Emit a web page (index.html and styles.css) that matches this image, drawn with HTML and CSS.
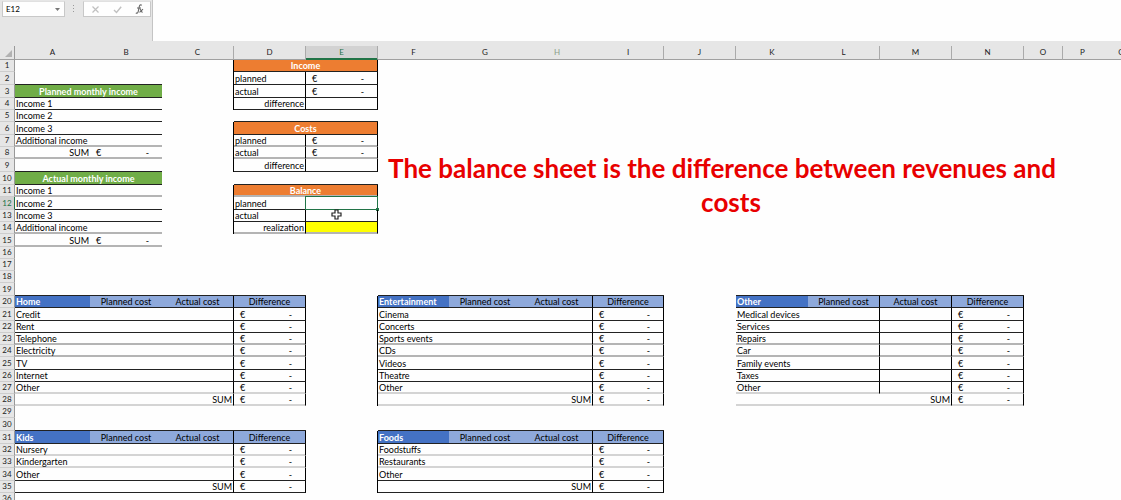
FILE: index.html
```html
<!DOCTYPE html>
<html lang="en">
<head>
<meta charset="utf-8">
<title>Household budget</title>
<link rel="stylesheet" href="styles.css">
</head>
<body>
<header class="bar">
  <div class="namebox">
    <input class="name" type="text" value="E12" aria-label="Name box">
    <button class="drop" type="button" aria-label="Show names"><svg width="5" height="3" viewBox="0 0 5 3"><path d="M0 0h5L2.500 3z" fill="#777"/></svg></button>
  </div>
  <svg class="grip" width="3" height="9" viewBox="0 0 3 9"><path d="M1 1h1v1H1zM1 4h1v1H1zM1 7h1v1H1z" fill="#999"/></svg>
  <div class="tools">
    <button type="button" aria-label="Cancel"><svg width="9" height="9" viewBox="0 0 9 9"><path d="M1.500 1.500l6 6M7.500 1.500l-6 6" stroke="#c0c0c0" stroke-width="1.200" fill="none"/></svg></button>
    <button type="button" aria-label="Enter"><svg width="9" height="9" viewBox="0 0 9 9"><path d="M1 5l2.500 2.500L8.200 1.800" stroke="#c0c0c0" stroke-width="1.400" fill="none"/></svg></button>
    <button type="button" aria-label="Insert function"><svg width="9" height="10" viewBox="0 0 9 10"><path d="M6.800 1.300C5.300.3 4.600 1 4.300 2.500L3.200 7.600C2.900 9 2 9.500.8 8.900M2 4h4M4.800 5.200c1.200-.4 1 3.400 2.800 2.900M8 5.200L4.500 8.300" stroke="#666" stroke-width="1.100" fill="none"/></svg></button>
  </div>
  <textarea class="formula" aria-label="Formula bar"></textarea>
</header>
<main class="sheet">
<table class="grid">
<colgroup><col class="c-num"><col class="c-first"><col><col><col><col><col class="c-71"><col><col><col class="c-71"><col><col><col><col><col><col class="c-small"><col class="c-small"><col class="c-small"></colgroup>
<thead>
<tr><th class="corner"><svg width="7" height="7" viewBox="0 0 7 7"><path d="M7 0v7H0z" fill="#b2b2b2"/></svg></th><th>A</th><th>B</th><th class="edge">C</th><th class="edge">D</th><th class="picked">E</th><th>F</th><th>G</th><th class="faded">H</th><th class="edge">I</th><th class="edge">J</th><th>K</th><th class="edge">L</th><th class="edge">M</th><th class="edge">N</th><th class="edge">O</th><th>P</th><th>Q</th></tr>
</thead>
<tbody>
<tr><th>1</th><td colspan="2"></td><td class="r"></td><td class="orange b r" colspan="2">Income</td></tr>
<tr class="tall"><th>2</th><td class="b" colspan="2"></td><td class="r"></td><td class="b r">planned</td><td class="b r"><div class="money"><span>€</span><span>-</span></div></td></tr>
<tr class="tall"><th>3</th><td class="green b" colspan="2">Planned monthly income</td><td class="r"></td><td class="b r">actual</td><td class="b r"><div class="money"><span>€</span><span>-</span></div></td></tr>
<tr><th>4</th><td class="b" colspan="2">Income 1</td><td class="r"></td><td class="b r end">difference</td><td class="b r"></td></tr>
<tr><th>5</th><td class="b" colspan="2">Income 2</td><td></td><td class="b" colspan="2"></td></tr>
<tr class="tall"><th>6</th><td class="b" colspan="2">Income 3</td><td class="r"></td><td class="orange b r" colspan="2">Costs</td></tr>
<tr class="soft"><th>7</th><td class="b" colspan="2">Additional income</td><td class="r"></td><td class="b r">planned</td><td class="b r"><div class="money"><span>€</span><span>-</span></div></td></tr>
<tr class="soft"><th>8</th><td class="b end">SUM</td><td class="b"><div class="money"><span>€</span><span>-</span></div></td><td class="r"></td><td class="b r">actual</td><td class="b r"><div class="money"><span>€</span><span>-</span></div></td></tr>
<tr class="tall"><th>9</th><td class="b" colspan="2"></td><td class="r"></td><td class="b r end">difference</td><td class="b r"></td></tr>
<tr class="tall"><th>10</th><td class="green b" colspan="2">Actual monthly income</td><td></td><td class="b" colspan="2"></td></tr>
<tr class="soft"><th>11</th><td class="b" colspan="2">Income 1</td><td class="r"></td><td class="orange b r" colspan="2">Balance</td></tr>
<tr class="tall"><th class="picked">12</th><td class="b" colspan="2">Income 2</td><td class="r"></td><td class="b r">planned</td><td class="b r active"><span class="cursor-frame"></span></td></tr>
<tr><th>13</th><td class="b" colspan="2">Income 3</td><td class="r"></td><td class="b r">actual</td><td class="b r active"><svg class="pointer" width="11" height="11" viewBox="0 0 11 11"><path d="M4 1h3v3h3v3H7v3H4V7H1V4h3z" fill="#fff" stroke="#222" stroke-width="1.200"/></svg></td></tr>
<tr class="soft"><th>14</th><td class="b" colspan="2">Additional income</td><td class="r"></td><td class="b r end">realization</td><td class="b r yellow"></td></tr>
<tr class="tall soft"><th>15</th><td class="b end">SUM</td><td class="b"><div class="money"><span>€</span><span>-</span></div></td></tr>
<tr><th>16</th></tr>
<tr><th>17</th></tr>
<tr><th>18</th></tr>
<tr class="tall"><th>19</th><td class="b" colspan="4"></td><td></td><td class="b" colspan="4"></td><td></td><td class="b" colspan="4"></td></tr>
<tr><th>20</th><td class="blue b">Home</td><td class="pale b">Planned cost</td><td class="pale b r">Actual cost</td><td class="pale b r">Difference</td><td class="r"></td><td class="blue b">Entertainment</td><td class="pale b">Planned cost</td><td class="pale b r">Actual cost</td><td class="pale b r">Difference</td><td></td><td class="blue b">Other</td><td class="pale b r">Planned cost</td><td class="pale b r">Actual cost</td><td class="pale b r">Difference</td></tr>
<tr class="tall"><th>21</th><td class="b r" colspan="3">Credit</td><td class="b r"><div class="money"><span>€</span><span>-</span></div></td><td class="r"></td><td class="b r" colspan="3">Cinema</td><td class="b r"><div class="money"><span>€</span><span>-</span></div></td><td></td><td class="b r" colspan="2">Medical devices</td><td class="b r"></td><td class="b r"><div class="money"><span>€</span><span>-</span></div></td></tr>
<tr><th>22</th><td class="b r" colspan="3">Rent</td><td class="b r"><div class="money"><span>€</span><span>-</span></div></td><td class="r"></td><td class="b r" colspan="3">Concerts</td><td class="b r"><div class="money"><span>€</span><span>-</span></div></td><td></td><td class="b r" colspan="2">Services</td><td class="b r"></td><td class="b r"><div class="money"><span>€</span><span>-</span></div></td></tr>
<tr class="soft"><th>23</th><td class="b r" colspan="3">Telephone</td><td class="b r"><div class="money"><span>€</span><span>-</span></div></td><td class="r"></td><td class="b r" colspan="3">Sports events</td><td class="b r"><div class="money"><span>€</span><span>-</span></div></td><td></td><td class="b r" colspan="2">Repairs</td><td class="b r"></td><td class="b r"><div class="money"><span>€</span><span>-</span></div></td></tr>
<tr class="soft"><th>24</th><td class="b r" colspan="3">Electricity</td><td class="b r"><div class="money"><span>€</span><span>-</span></div></td><td class="r"></td><td class="b r" colspan="3">CDs</td><td class="b r"><div class="money"><span>€</span><span>-</span></div></td><td></td><td class="b r" colspan="2">Car</td><td class="b r"></td><td class="b r"><div class="money"><span>€</span><span>-</span></div></td></tr>
<tr class="tall"><th>25</th><td class="b r" colspan="3">TV</td><td class="b r"><div class="money"><span>€</span><span>-</span></div></td><td class="r"></td><td class="b r" colspan="3">Videos</td><td class="b r"><div class="money"><span>€</span><span>-</span></div></td><td></td><td class="b r" colspan="2">Family events</td><td class="b r"></td><td class="b r"><div class="money"><span>€</span><span>-</span></div></td></tr>
<tr><th>26</th><td class="b r" colspan="3">Internet</td><td class="b r"><div class="money"><span>€</span><span>-</span></div></td><td class="r"></td><td class="b r" colspan="3">Theatre</td><td class="b r"><div class="money"><span>€</span><span>-</span></div></td><td></td><td class="b r" colspan="2">Taxes</td><td class="b r"></td><td class="b r"><div class="money"><span>€</span><span>-</span></div></td></tr>
<tr class="soft light"><th>27</th><td class="b r" colspan="3">Other</td><td class="b r"><div class="money"><span>€</span><span>-</span></div></td><td class="r"></td><td class="b r" colspan="3">Other</td><td class="b r"><div class="money"><span>€</span><span>-</span></div></td><td></td><td class="b r" colspan="2">Other</td><td class="b r"></td><td class="b r"><div class="money"><span>€</span><span>-</span></div></td></tr>
<tr class="soft light"><th>28</th><td class="b r end" colspan="3">SUM</td><td class="b r"><div class="money"><span>€</span><span>-</span></div></td><td class="r"></td><td class="b r end" colspan="3">SUM</td><td class="b r"><div class="money"><span>€</span><span>-</span></div></td><td></td><td class="b r end" colspan="3">SUM</td><td class="b r"><div class="money"><span>€</span><span>-</span></div></td></tr>
<tr><th>29</th></tr>
<tr class="tall"><th>30</th><td class="b" colspan="4"></td><td></td><td class="b" colspan="4"></td></tr>
<tr class="tall"><th>31</th><td class="blue b">Kids</td><td class="pale b">Planned cost</td><td class="pale b r">Actual cost</td><td class="pale b r">Difference</td><td class="r"></td><td class="blue b">Foods</td><td class="pale b">Planned cost</td><td class="pale b r">Actual cost</td><td class="pale b r">Difference</td></tr>
<tr class="soft light"><th>32</th><td class="b r" colspan="3">Nursery</td><td class="b r"><div class="money"><span>€</span><span>-</span></div></td><td class="r"></td><td class="b r" colspan="3">Foodstuffs</td><td class="b r"><div class="money"><span>€</span><span>-</span></div></td></tr>
<tr class="soft light"><th>33</th><td class="b r" colspan="3">Kindergarten</td><td class="b r"><div class="money"><span>€</span><span>-</span></div></td><td class="r"></td><td class="b r" colspan="3">Restaurants</td><td class="b r"><div class="money"><span>€</span><span>-</span></div></td></tr>
<tr class="tall"><th>34</th><td class="b r" colspan="3">Other</td><td class="b r"><div class="money"><span>€</span><span>-</span></div></td><td class="r"></td><td class="b r" colspan="3">Other</td><td class="b r"><div class="money"><span>€</span><span>-</span></div></td></tr>
<tr><th>35</th><td class="b r end" colspan="3">SUM</td><td class="b r"><div class="money"><span>€</span><span>-</span></div></td><td class="r"></td><td class="b r end" colspan="3">SUM</td><td class="b r"><div class="money"><span>€</span><span>-</span></div></td></tr>
<tr><th>36</th></tr>
</tbody>
</table>
<p class="note">The balance sheet is the difference between revenues and <span class="note-end">costs</span></p>
</main>
</body>
</html>
```
FILE: styles.css
```css
* { box-sizing: border-box; }
body {
  margin: 0;
  height: 100vh;
  display: flex;
  flex-direction: column;
  overflow: hidden;
  background: #fefefe;
  color: #000;
  font: 9px/11px Lato, "Open Sans", sans-serif;
}
button, input, textarea {
  margin: 0;
  padding: 0;
  border: 0;
  background: none;
  font: inherit;
  color: inherit;
  outline: 0;
}
button { display: flex; align-items: center; justify-content: center; }

/* Formula bar */
.bar {
  flex: none;
  display: flex;
  align-items: flex-start;
  background: #e6e6e6;
  padding: 0 0 5px 2px;
}
.namebox, .tools {
  display: flex;
  align-items: center;
  height: 16px;
  margin-top: 1px;
  background: #fefefe;
  border: 1px solid #c8c8c8;
  border-top-color: #e0e0e0;
}
.namebox { width: 63px; }
.name { flex: 1; min-width: 0; padding-left: 3px; font-size: 8px; }
.drop { width: 13px; height: 14px; }
.grip { margin: 4px 8px 0 7px; }
.tools { width: 68px; justify-content: space-around; }
.tools button { width: 20px; height: 14px; }
.formula {
  flex: 1;
  height: 41px;
  margin-left: 1px;
  padding: 3px;
  background: #fefefe;
  border-left: 1px solid #c4c4c4;
  resize: none;
}

/* Worksheet */
.sheet { position: relative; flex: 1; overflow: hidden; background: linear-gradient(#e6e6e6 13px, #a0a0a0 13px, #a0a0a0 14px, #fefefe 14px); }
.grid { table-layout: fixed; width: 0; border-collapse: separate; border-spacing: 0; }
col { width: 72px; }
.c-num { width: 15px; }
.c-first { width: 75px; }
.c-71 { width: 71px; }
.c-small { width: 39px; }
th, td { height: 12px; padding: 0 1px; overflow: hidden; white-space: nowrap; vertical-align: middle; text-align: left; }
.tall th, .tall td { height: 13px; }
th { font-weight: 400; font-size: 8px; text-align: center; color: #222; background: #e6e6e6; }
thead th { height: 14px; border-bottom: 1px solid #a0a0a0; }
tbody th { padding: 0; border-right: 1px solid #999; border-bottom: 1px solid #cdcdcd; }
th.corner { padding: 0 2px 2px; text-align: right; vertical-align: bottom; border-right: 1px solid #999; }
.corner svg { display: block; margin-left: auto; }
.edge { border-right: 1px solid #aaa; }
.faded { color: #8aa08a; }
th.picked { background: #d2d2d2; color: #217346; }
thead .picked { border-bottom-color: #217346; border-right: 1px solid #aaa; box-shadow: inset 0 -1px #217346; }
tbody .picked { border-right-color: #217346; }

.b { border-bottom: 1px solid #222; }
.r { border-right: 1px solid #000; }
.soft .b { border-bottom-color: #b4b4b4; box-shadow: inset 0 -1px #b4b4b4; }
.light .b { border-bottom-color: #d4d4d4; box-shadow: inset 0 -1px #d4d4d4; }
.end { text-align: right; }
.green, .orange { text-align: center; font-weight: 700; color: #fff; }
.green { background: #70ad47; }
.orange { background: #ed7d31; }
.yellow { background: #ff0; }
.blue { background: #4472c4; color: #fff; font-weight: 700; }
.pale { background: #8ea9db; text-align: center; }
.money { display: flex; justify-content: space-between; padding: 0 12px 0 5px; }

/* Selection and pointer */
.active { position: relative; overflow: visible; }
.cursor-frame { position: absolute; inset: -1px -1px -1px -1px; border: 1px solid #217346; }
.cursor-frame::after { content: ""; position: absolute; right: -2px; bottom: -2px; width: 3px; height: 3px; background: #217346; }
.pointer { position: absolute; left: 25px; top: -1px; }

/* Floating text box */
.note {
  position: absolute;
  left: 378px;
  top: 105px;
  width: 688px;
  margin: 0;
  text-align: center;
  color: #e80000;
  font: 700 26px/34px Lato, "Open Sans", sans-serif;
}
.note-end { display: inline-block; padding-left: 18px; }
```
